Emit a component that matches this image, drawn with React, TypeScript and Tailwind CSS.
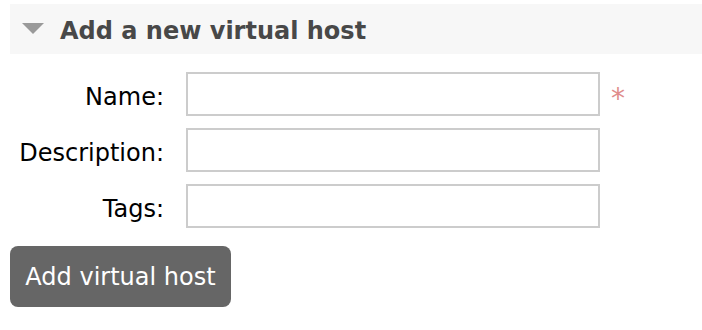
export default function App() {
  const fields = [
    { label: "Name:", required: true },
    { label: "Description:", required: false },
    { label: "Tags:", required: false },
  ]

  return (
    <div className="w-[702px] h-[330px] bg-white pt-1 pl-[10px] font-['DejaVu_Sans',Verdana,sans-serif]">
      <div className="h-[50px] bg-[#f7f7f7] flex items-center pl-3">
        <svg width="22" height="12" viewBox="0 0 22 12" className="mr-4">
          <polygon points="0,0 22,0 11,11" fill="#9a9a9a" />
        </svg>
        <h2 className="text-[24px] font-bold text-[#484848] pt-[3px]">Add a new virtual host</h2>
      </div>

      <div className="mt-[18px] flex flex-col gap-3">
        {fields.map((f, i) => (
          <div key={i} className="flex items-center">
            <label className="w-[154px] text-right text-[24px] text-black pt-[5px]">{f.label}</label>
            <input className="ml-[22px] w-[414px] h-[44px] border-2 border-[#cccccc] outline-none" />
            {f.required && (
              <span className="ml-[11px] text-[28px] text-[#e08c8c] leading-none self-start pt-[13px]">*</span>
            )}
          </div>
        ))}
      </div>

      <button className="mt-[18px] h-[61px] w-[221px] rounded-lg bg-[#666666] text-white text-[24px]">
        Add virtual host
      </button>
    </div>
  )
}
